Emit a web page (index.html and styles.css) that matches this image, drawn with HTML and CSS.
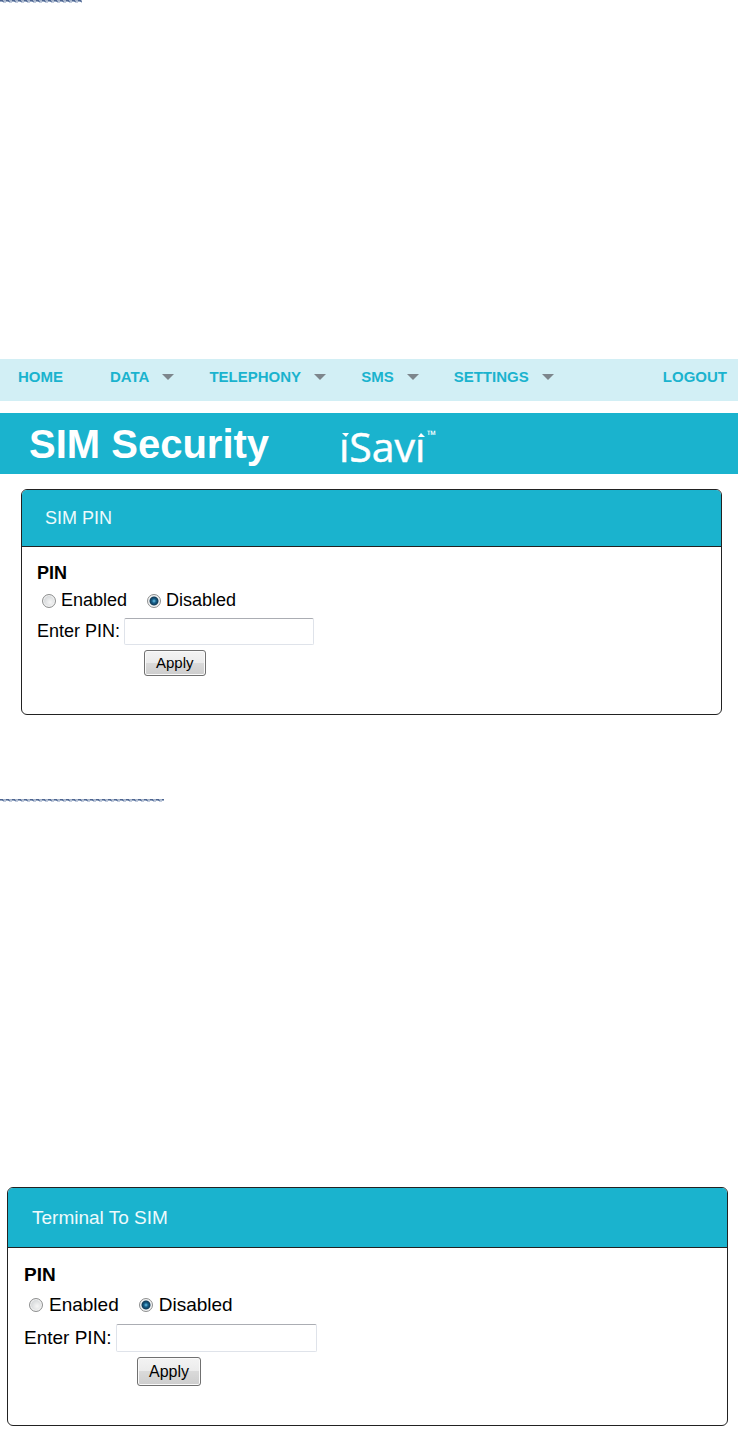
FILE: index.html
```html
<!DOCTYPE html>
<html lang="en">
<head>
  <meta charset="UTF-8" />
  <meta name="viewport" content="width=device-width, initial-scale=1" />
  <title>SIM Security</title>
  <link rel="stylesheet" href="styles.css">
</head>
<body>
  <div class="squiggle short" aria-hidden="true"></div>

  <main>
    <nav class="navbar" aria-label="Main">
      <a href="#" class="home">HOME</a>
      <a href="#" class="has-menu">DATA</a>
      <a href="#" class="has-menu">TELEPHONY</a>
      <a href="#" class="has-menu">SMS</a>
      <a href="#" class="has-menu">SETTINGS</a>
      <a href="#" class="logout">LOGOUT</a>
    </nav>

    <header class="title-bar">
      <h1>SIM Security</h1>
      <svg class="logo" width="110" height="61" viewBox="0 0 110 61" role="img" aria-label="iSavi">
        <text class="logo-name" x="0" y="49">iSavi</text>
        <!-- triangles in place of the dots -->
        <rect class="dot-gap" x="0" y="14" width="11" height="12" />
        <rect class="dot-gap" x="76" y="14" width="12" height="12" />
        <path class="dot" d="M3 20h7l-3 4z" />
        <path class="dot" d="M82 20l4 4h-7z" />
        <text class="logo-tm" x="88" y="26">™</text>
      </svg>
    </header>

    <section class="card">
      <h2>SIM PIN</h2>
      <form class="card-body">
        <fieldset>
          <legend>PIN</legend>
          <div class="radios">
            <label><input type="radio" name="sim-pin" />Enabled</label>
            <label><input type="radio" name="sim-pin" checked />Disabled</label>
          </div>
        </fieldset>
        <div class="pin-row">
          <label for="sim-code">Enter PIN:</label>
          <input type="text" id="sim-code" />
        </div>
        <button type="button">Apply</button>
      </form>
    </section>

    <div class="squiggle long" aria-hidden="true"></div>

    <section class="card card-large">
      <h2>Terminal To SIM</h2>
      <form class="card-body">
        <fieldset>
          <legend>PIN</legend>
          <div class="radios">
            <label><input type="radio" name="terminal-pin" />Enabled</label>
            <label><input type="radio" name="terminal-pin" checked />Disabled</label>
          </div>
        </fieldset>
        <div class="pin-row">
          <label for="terminal-code">Enter PIN:</label>
          <input type="text" id="terminal-code" />
        </div>
        <button type="button">Apply</button>
      </form>
    </section>
  </main>
</body>
</html>
```

FILE: styles.css
```css
* {
  box-sizing: border-box;
}

body {
  margin: 0;
  background: #fff;
  color: #000;
  font-family: "Liberation Sans", Arial, sans-serif;
}

/* Thin woven underline */
.squiggle {
  height: 3px;
  background:
    repeating-linear-gradient(90deg, #4e6590 0 3px, #a3b2c9 3px 6px) 0 0 / 100% 1px no-repeat,
    repeating-linear-gradient(90deg, #9aabc5 0 2px, #6c82a8 2px 4px, #b4c0d3 4px 6px) 0 1px / 100% 1px no-repeat,
    repeating-linear-gradient(90deg, #fff 0 3px, #c3ccdd 3px 6px) 0 2px / 100% 1px no-repeat;
}
.squiggle.short {
  width: 82px;
  margin-bottom: 356px;
}
.squiggle.long {
  width: 164px;
  margin: 84px 0 385px;
}

.navbar {
  display: flex;
  align-items: flex-start;
  gap: 35px;
  height: 42px;
  padding: 9px 11px 0 18px;
  margin-bottom: 12px;
  background: #d2eff5;
}
.navbar a {
  display: flex;
  align-items: center;
  color: #1ab3ce;
  font-size: 15px;
  font-weight: 700;
  line-height: 18px;
  text-decoration: none;
}
.navbar .home {
  margin-right: 12px;
}
.navbar .logout {
  margin-left: auto;
}
.has-menu::after {
  content: "";
  margin-left: 13px;
  border: 6px solid transparent;
  border-top-color: #7d868c;
  border-bottom: 0;
}

.title-bar {
  display: flex;
  align-items: center;
  gap: 70px;
  height: 61px;
  padding-left: 29px;
  margin-bottom: 15px;
  background: #1ab3ce;
  color: #fff;
}
.title-bar h1 {
  margin: 0;
  font-size: 40px;
  line-height: 60px;
}
.logo-name {
  fill: #fff;
  stroke: #fff;
  stroke-width: 0.5;
  font-family: "Open Sans", "Noto Sans", sans-serif;
  font-size: 41px;
}
.logo-tm {
  fill: #fff;
  font-family: "Open Sans", "Noto Sans", sans-serif;
  font-size: 12px;
  font-weight: 700;
}
.dot-gap {
  fill: #1ab3ce;
}
.dot {
  fill: #fff;
}

.card {
  --text: 18px;
  --row: 27px;
  --radio-gap: 5px;
  --input-height: 27px;
  --input-width: 190px;
  --button-text: 15px;
  margin: 0 16px 0 21px;
  border: 1px solid #222;
  border-radius: 6px;
  overflow: hidden;
  font-size: var(--text);
}
.card h2 {
  margin: 0;
  padding: 0 23px;
  border-bottom: 1px solid #222;
  background: #1ab3ce;
  color: #eefafc;
  font-size: var(--text);
  font-weight: 400;
  line-height: 56px;
}
.card-body {
  padding: 13px 15px 38px;
}
.card fieldset {
  margin: 0;
  padding: 0;
  border: 0;
}
.card legend {
  padding: 0;
  font-weight: 700;
  line-height: var(--row);
}
.radios {
  display: flex;
  gap: 20px;
  padding-left: 5px;
  line-height: var(--row);
}
.radios label {
  display: flex;
  align-items: center;
  gap: var(--radio-gap);
}
.radios input {
  appearance: none;
  width: 14px;
  height: 14px;
  margin: 0;
  border: 1px solid #8e8f8f;
  border-radius: 50%;
  background: radial-gradient(circle at 60% 60%, #f6f6f6, #c4c8cb);
  box-shadow: inset 0 0 0 1px #f4f4f4;
}
.radios input:checked {
  background: radial-gradient(circle at 50% 50%, #6fc8ea 0, #17608c 2px, #123c58 4px, #e6e9eb 5px);
}
.pin-row {
  display: flex;
  align-items: center;
  gap: 4px;
  margin: 4px 0 5px;
}
.pin-row input {
  width: var(--input-width);
  height: var(--input-height);
  padding: 2px 6px;
  border: 1px solid #dfe3ea;
  border-top-color: #abadb3;
  border-radius: 2px;
  font: inherit;
}
.card button {
  display: block;
  margin-left: 107px;
  padding: 0 11px;
  border: 1px solid #707070;
  border-radius: 3px;
  background: linear-gradient(#f3f3f3 0, #ebebeb 50%, #dadada 50%, #cdcdcd);
  box-shadow: inset 0 0 0 1px #fafafa;
  color: #000;
  font-family: inherit;
  font-size: var(--button-text);
  line-height: 24px;
}

.card-large {
  --text: 19px;
  --row: 30px;
  --radio-gap: 6px;
  --input-height: 28px;
  --input-width: 201px;
  --button-text: 16px;
  margin: 0 10px 13px 7px;
}
.card-large h2 {
  padding: 0 24px;
  line-height: 59px;
}
.card-large .card-body {
  padding: 12px 16px 39px;
}
.card-large button {
  margin-left: 113px;
  line-height: 27px;
}
```
